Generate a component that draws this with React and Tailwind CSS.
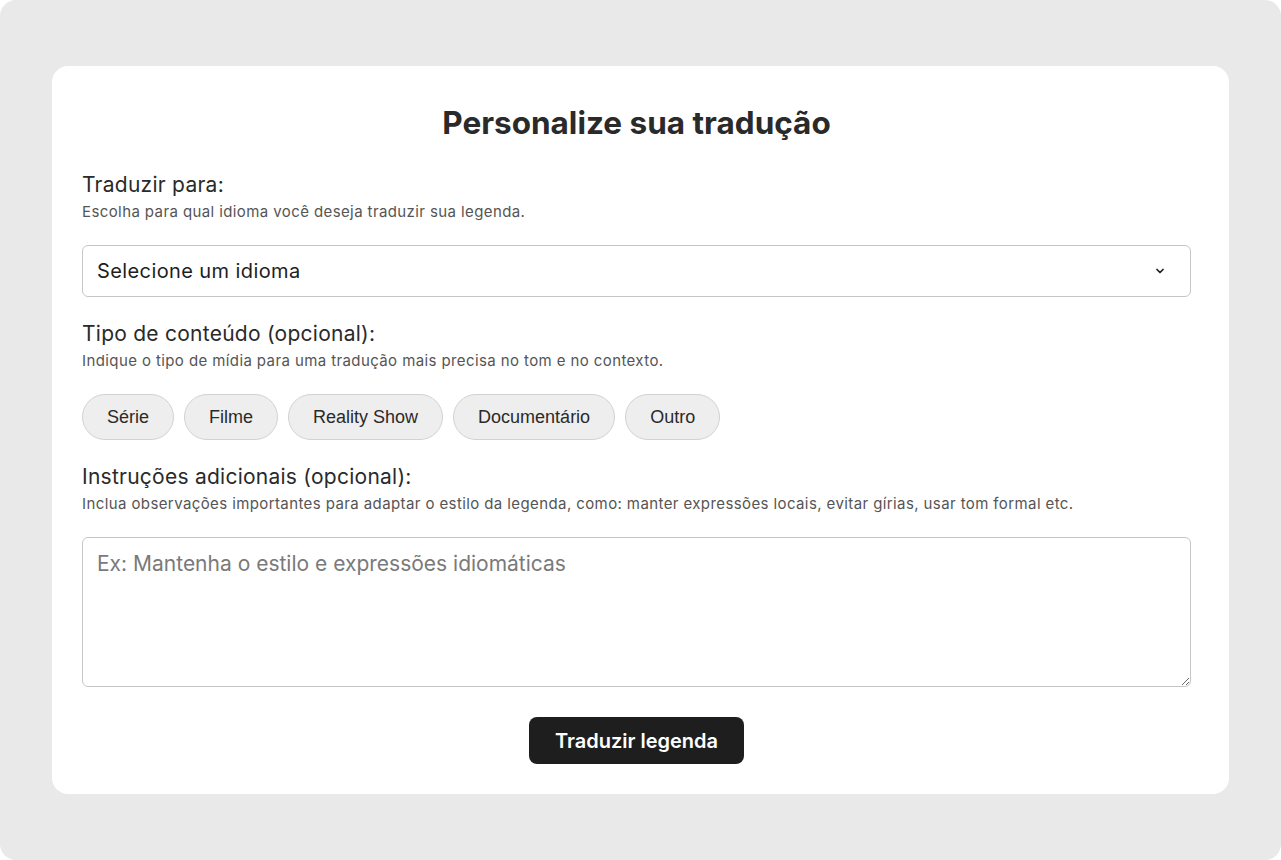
import React, { useState } from 'react';

const contentTypes = ['Série', 'Filme', 'Reality Show', 'Documentário', 'Outro'];

const ChevronDown = () => (
  <svg width="12" height="12" viewBox="0 0 24 24" fill="none" stroke="currentColor" strokeWidth="3.5" strokeLinecap="round" strokeLinejoin="round">
    <path d="M6 9l6 6 6-6" />
  </svg>
);

const Section = ({ title, hint, children }) => (
  <div>
    <h2 className="text-[21px] leading-7 tracking-[0.25px] text-[#2a2a2a]">{title}</h2>
    <p className="mt-[3px] text-[15px] leading-5 tracking-[0.4px] text-[#555555]">{hint}</p>
    {children}
  </div>
);

const App = () => {
  const [language, setLanguage] = useState('');
  const [contentType, setContentType] = useState(null);
  const [notes, setNotes] = useState('');

  return (
    <div className="h-[860px] w-full rounded-2xl bg-[#e9e9e9] px-[52px] pt-[66px] font-['Inter',sans-serif]">
      <div className="rounded-2xl bg-white pl-[30px] pr-[38px] pt-[39px] pb-[30px]">
        <h1 className="text-center text-[31.5px] font-bold leading-9 text-[#2a2a2a]">Personalize sua tradução</h1>

        <div className="mt-[30px]">
          <Section title="Traduzir para:" hint="Escolha para qual idioma você deseja traduzir sua legenda.">
            <div className="relative mt-[23px]">
              <select
                value={language}
                onChange={(e) => setLanguage(e.target.value)}
                className="h-[52px] w-full appearance-none rounded-md border border-[#c6c6c6] bg-white px-[14px] text-[20px] tracking-[0.4px] text-[#1e1e1e] outline-none"
              >
                <option value="">Selecione um idioma</option>
                <option value="en">Inglês</option>
                <option value="es">Espanhol</option>
              </select>
              <span className="pointer-events-none absolute right-[25px] top-1/2 -translate-y-1/2 text-[#1e1e1e]">
                <ChevronDown />
              </span>
            </div>
          </Section>
        </div>

        <div className="mt-[23px]">
          <Section title="Tipo de conteúdo (opcional):" hint="Indique o tipo de mídia para uma tradução mais precisa no tom e no contexto.">
            <div className="mt-[23px] flex gap-[10px]">
              {contentTypes.map((type) => (
                <button
                  key={type}
                  onClick={() => setContentType(type)}
                  className={`h-[46px] rounded-full border border-[#d2d2d2] px-[24px] font-[family-name:'Liberation_Sans',Arial,sans-serif] text-[18px] text-[#2a2a2a] ${contentType === type ? 'bg-[#dcdcdc]' : 'bg-[#eeeeee]'}`}
                >
                  {type}
                </button>
              ))}
            </div>
          </Section>
        </div>

        <div className="mt-[23px]">
          <Section title="Instruções adicionais (opcional):" hint="Inclua observações importantes para adaptar o estilo da legenda, como: manter expressões locais, evitar gírias, usar tom formal etc.">
            <textarea
              value={notes}
              onChange={(e) => setNotes(e.target.value)}
              placeholder="Ex: Mantenha o estilo e expressões idiomáticas"
              className="mt-[23px] block h-[150px] w-full rounded-md border border-[#c6c6c6] px-[14px] py-[10px] text-[21px] text-[#1e1e1e] placeholder:text-[#7a7a7a] outline-none"
            />
          </Section>
        </div>

        <div className="mt-[30px] flex justify-center">
          <button className="h-[47px] w-[215px] rounded-lg bg-[#1e1e1e] text-[20px] font-semibold text-white">
            Traduzir legenda
          </button>
        </div>
      </div>
    </div>
  );
};

export default App;
